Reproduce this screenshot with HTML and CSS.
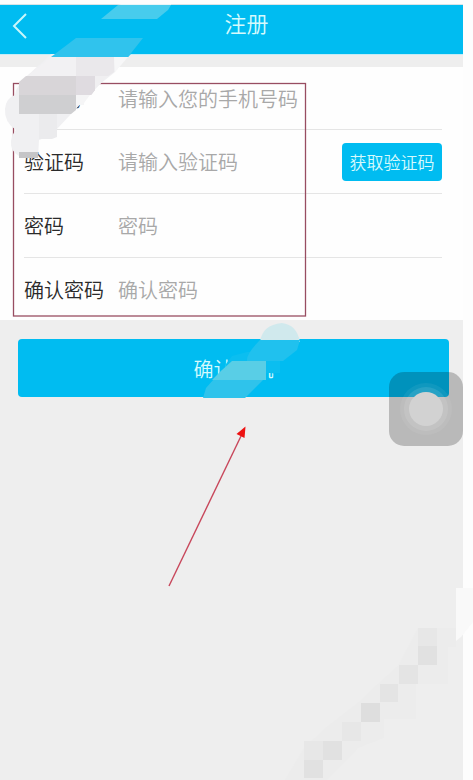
FILE: index.html
```html
<!DOCTYPE html>
<html lang="zh-CN">

<head>
  <meta charset="UTF-8">
  <meta name="viewport" content="width=device-width, initial-scale=1.0">
  <title>注册</title>
  <link rel="stylesheet" href="styles.css">
</head>

<body>
  <div class="screen">
    <header class="header">
      <button class="back" type="button" aria-label="返回">
        <svg width="16" height="28" viewBox="0 0 16 28">
          <path d="M14 2 L2 14 L14 26" fill="none" stroke="#c8f6fb" stroke-width="2" />
        </svg>
      </button>
      <h1>注册</h1>
    </header>

    <form class="register">
      <div class="fields">
        <div class="row">
          <label for="phone">手机号</label>
          <input type="tel" id="phone" placeholder="请输入您的手机号码">
        </div>
        <div class="row">
          <label for="code">验证码</label>
          <input type="text" id="code" placeholder="请输入验证码">
          <button class="get-code" type="button">获取验证码</button>
        </div>
        <div class="row">
          <label for="password">密码</label>
          <input type="password" id="password" placeholder="密码">
        </div>
        <div class="row">
          <label for="confirm">确认密码</label>
          <input type="password" id="confirm" placeholder="确认密码">
        </div>
      </div>
      <button class="submit" type="button">确认手机</button>
    </form>

    <button class="assistive" type="button" aria-label="辅助按钮"><span></span></button>
  </div>

  <!-- marks drawn over the screen -->
  <svg class="marks" width="473" height="780" viewBox="0 0 473 780" aria-hidden="true">
    <rect x="13.5" y="83.5" width="292" height="232.5" fill="none" stroke="#984d61" stroke-width="1.3" />
    <path d="M169 586 L242 434" stroke="#c8475b" stroke-width="1.4" />
    <path d="M245.500 426.500 L236.500 434 L244.500 438 Z" fill="#ed1111" />

    <!-- top left smear -->
    <path d="M133 0 H171 V5 H118 Z" fill="#e8f5f7" />
    <path d="M118 5 H171 L168 10 L157 19 H101 Z" fill="#47cced" />
    <path d="M76 38 H143 L128 57 H51 Z" fill="#30c3ed" />
    <path d="M51 54 H128 L115 72 L100 84 L71 114 L56 130 Q52 136 39 140 L38 158 L19 156 Q10 151 11 141 Q12 134 16 130 Q4 122 5 109 Q6 98 15 95 Q15 88 26 77 Z" fill="#f0f0f2" />
    <path d="M55 54 H131 L128 57 H51 Z" fill="#30c3ed" />
    <path d="M51 57 H76 V76 H27 Z" fill="#f2f1f3" />
    <path d="M76 57 H114 L114 72 L108 76 H76 Z" fill="#eae8eb" />
    <path d="M114 57 H128 L115 72 Z" fill="#f7f7f8" />
    <path d="M26 76 H95 V90 L91 95 H19 V82 Z" fill="#d8d5d8" />
    <path d="M76 76 H95 V90 L91 95 H76 Z" fill="#dfdbe0" />
    <path d="M95 76 H108 L95 89 Z" fill="#f0eff1" />
    <path d="M76 95 H90 L84 103 V105 H76 Z" fill="#f5f5f6" />
    <path d="M19 95 H76 V110 L71 114 H19 Z" fill="#cfcfd1" />
    <path d="M39 114 H57 V137 L52 139 H39 Z" fill="#ebebed" />
    <rect x="19" y="152" width="19" height="6" fill="#c5c5c7" />

    <!-- smear over the submit button -->
    <path d="M260 342 Q262 325 282 323 Q297 325 300 342 Z" fill="#d0e9ed" />
    <path d="M232 356 L247 352 H280 V373 H264 V380 H226 V364 Z" fill="#0bbef0" />
    <path d="M260 340 H300 L297 350 L283 361 H247 Q246 354 260 340 Z" fill="#20c1ee" />
    <path d="M222 370 V380 H263 L245 398 H203 L206 388 Z" fill="#2fc3eb" />
    <path d="M232 361 H266 V380 H212 L222 370 Z" fill="#59cee6" />

    <!-- bottom right smear -->
    <path d="M456 588 H473 V622 L461 637 L456 641 Z" fill="#f9f9f9" />
    <path d="M418 628 H456 V647 H448 V684 H416 V719 H384 V738 L358 748 L327 780 H285 L304 748 L328 726 L359 702 L378 684 L398 666 Z" fill="#ececec" />
    <g fill="#e1e1e1">
      <rect x="418" y="646" width="19" height="19" />
      <rect x="399" y="665" width="19" height="19" fill="#e4e4e4" />
      <rect x="380" y="684" width="18" height="18" fill="#e4e4e4" />
      <rect x="361" y="703" width="19" height="19" fill="#dedede" />
      <rect x="323" y="741" width="19" height="19" />
      <rect x="304" y="760" width="19" height="18" />
    </g>
    <g fill="#e7e7e7">
      <rect x="418" y="628" width="19" height="18" />
      <rect x="342" y="722" width="19" height="19" />
      <rect x="304" y="741" width="19" height="19" />
    </g>
  </svg>
</body>

</html>
```
FILE: styles.css
```css
* {
  margin: 0;
  padding: 0;
  box-sizing: border-box;
}

body {
  position: relative;
  min-height: 100vh;
  padding-right: 10px;
  background-color: #fdfdfd;
  font-family: "Noto Sans CJK SC", sans-serif;
  font-weight: 350;
  display: flex;
  border-top: 4px solid #fdfdfd;
}

button,
input {
  font-family: inherit;
  font-weight: inherit;
  border: none;
}

button {
  cursor: pointer;
}

.screen {
  position: relative;
  flex: 1;
  background-color: #eeeeee;
  border-top: 1px solid #d8e3e6;
}

.header {
  height: 50px;
  display: flex;
  align-items: center;
  background-color: #00bcf1;
  border-bottom: 1px solid #c4ecf6;
  padding-bottom: 16px;
}

.back {
  width: 30px;
  height: 28px;
  padding-left: 10px;
  background: none;
  line-height: 0;
  margin-top: 8px;
}

h1 {
  flex: 1;
  font-size: 22px;
  font-weight: 350;
  line-height: 32px;
  text-align: center;
  color: #d5fafd;
}

.fields {
  margin-top: 12px;
  padding: 0 21px 0 24px;
  background-color: #fefefe;
}

.row {
  height: 64px;
  display: flex;
  align-items: center;
  border-bottom: 1px solid #e5e5e5;
}

.row:first-child {
  height: 63px;
}

.row:last-child {
  height: 62px;
  border-bottom: none;
}

.row label {
  width: 94px;
  font-size: 20px;
  color: #2a2a2a;
}

.row input {
  flex: 1;
  min-width: 0;
  height: 40px;
  font-size: 20px;
  background: transparent;
  outline: none;
}

.row input::placeholder {
  color: #a8a8a8;
}

.get-code {
  width: 100px;
  height: 38px;
  font-size: 17px;
  color: #d5fafd;
  background-color: #00bcf1;
  border-radius: 4px;
}

.submit {
  display: block;
  width: calc(100% - 32px);
  height: 58px;
  margin: 19px 14px 0 18px;
  font-size: 20px;
  color: #d5fafd;
  background-color: #00bcf1;
  border-radius: 4px;
}

.assistive {
  position: absolute;
  top: 367px;
  right: 0;
  width: 74px;
  height: 74px;
  border-radius: 15px;
  background-color: rgba(0, 0, 0, 0.22);
  display: flex;
  align-items: center;
  justify-content: center;
}

.assistive span {
  width: 34px;
  height: 34px;
  border-radius: 50%;
  background-color: #d2d2d2;
  box-shadow: 0 0 0 5px rgba(255, 255, 255, 0.1), 0 0 0 9px rgba(255, 255, 255, 0.06);
}

.marks {
  position: absolute;
  top: -4px;
  left: 0;
  pointer-events: none;
}
```
